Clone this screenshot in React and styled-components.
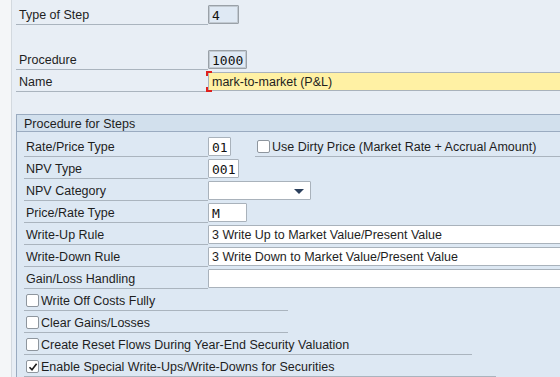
import React from "react";
import styled, { createGlobalStyle } from "styled-components";

const Global = createGlobalStyle`
  html, body { margin: 0; padding: 0; }
  body {
    width: 560px; height: 377px; overflow: hidden;
    background: #e8eef5;
    font-family: "Liberation Sans", Arial, sans-serif;
    font-size: 12.5px; color: #1e1e1e;
  }
`;

const Page = styled.div`
  display: flex;
  width: 560px;
  height: 377px;
  overflow: hidden;
`;

const SideStrip = styled.div`
  width: 11px;
  flex: none;
  background: #f4f6f8;
  border-right: 1px solid #d3d9df;
`;

const Main = styled.div`
  flex: 1;
  padding: 3px 0 0 4px;
  display: flex;
  flex-direction: column;
  min-width: 0;
`;

const Row = styled.div`
  display: flex;
  align-items: flex-start;
  height: 22px;
  flex: none;
  margin-top: ${(p) => p.$gap || 0}px;
`;

const Label = styled.div`
  box-sizing: border-box;
  width: ${(p) => p.$w || 192}px;
  height: 22px;
  flex: none;
  display: flex;
  align-items: center;
  padding-left: ${(p) => (p.$pad != null ? p.$pad : 3)}px;
  padding-top: 2px;
  border-bottom: 1px solid #aab4be;
  white-space: nowrap;
`;

const Field = styled.div`
  box-sizing: border-box;
  margin-top: 2px;
  height: 19px;
  width: ${(p) => (p.$w ? p.$w + "px" : "auto")};
  ${(p) => (p.$grow ? "flex: 1; min-width: 0; margin-right: -40px;" : "flex: none;")}
  display: flex;
  align-items: center;
  padding-left: 3px;
  padding-top: 1px;
  background: ${(p) =>
    p.$display ? "#dfe9f4" : p.$required ? "#fff1a4" : "#ffffff"};
  border: 1px solid ${(p) => (p.$display ? "#9aa1a8" : "#a9b2bb")};
  box-shadow: ${(p) => (p.$display ? "inset 0 0 0 1px #c2cad2" : "none")};
  border-radius: 1px;
  white-space: nowrap;
  position: relative;
`;

const Mono = styled.span`
  font-family: "DejaVu Sans Mono", "Liberation Mono", monospace;
  font-size: 13px;
  color: #111;
`;

const Corner = styled.span`
  position: absolute;
  left: -3px;
  width: 4px;
  height: 3px;
  border-left: 2px solid #e0201c;
  ${(p) =>
    p.$bottom
      ? "bottom: -2px; border-bottom: 2px solid #e0201c;"
      : "top: -2px; border-top: 2px solid #e0201c;"}
`;

const Group = styled.div`
  margin-top: 22px;
  margin-right: -20px;
  border: 1px solid #9aabc0;
  border-right: none;
  background: #dde8f3;
  flex: 1;
`;

const GroupHeader = styled.div`
  height: 17px;
  display: flex;
  align-items: center;
  padding-left: 7px;
  padding-top: 1px;
  box-sizing: border-box;
  background: #d2e0ed;
  border-bottom: 1px solid #9aabc0;
`;

const GroupBody = styled.div`
  padding: 3px 0 0 7px;
  display: flex;
  flex-direction: column;
`;

const CheckLabel = styled.div`
  box-sizing: border-box;
  width: ${(p) => (p.$w ? p.$w + "px" : "auto")};
  ${(p) => (p.$grow ? "flex: 1;" : "flex: none;")}
  margin-left: ${(p) => p.$ml || 0}px;
  height: 22px;
  display: flex;
  align-items: center;
  gap: 2px;
  padding-left: 2px;
  padding-top: 2px;
  border-bottom: 1px solid #aab4be;
  white-space: nowrap;
`;

const Box = styled.span`
  box-sizing: border-box;
  width: 13px;
  height: 13px;
  flex: none;
  background: #ffffff;
  border: 1px solid #8e969e;
  border-radius: 2px;
  display: flex;
  align-items: center;
  justify-content: center;
`;

const Caret = styled.span`
  margin-left: auto;
  margin-right: 6px;
  width: 0;
  height: 0;
  border-left: 5px solid transparent;
  border-right: 5px solid transparent;
  border-top: 5px solid #2b3f5c;
`;

const Check = ({ checked, children, w, grow, ml }) => (
  <CheckLabel $w={w} $grow={grow} $ml={ml}>
    <Box>
      {checked && (
        <svg width="10" height="10" viewBox="0 0 10 10">
          <path d="M1.5 5.2 L4 7.8 L8.6 1.8" fill="none" stroke="#1c1c1c" strokeWidth="1.6" />
        </svg>
      )}
    </Box>
    <span>{children}</span>
  </CheckLabel>
);

export default function App() {
  return (
    <>
      <Global />
      <Page>
        <SideStrip />
        <Main>
          <Row>
            <Label>Type of Step</Label>
            <Field $display $w={31}>
              <Mono>4</Mono>
            </Field>
          </Row>
          <Row $gap={23}>
            <Label>Procedure</Label>
            <Field $display $w={39}>
              <Mono>1000</Mono>
            </Field>
          </Row>
          <Row>
            <Label>Name</Label>
            <Field $required $grow>
              <Corner />
              <Corner $bottom />
              <span>mark-to-market (P&amp;L)</span>
            </Field>
          </Row>
          <Group>
            <GroupHeader>Procedure for Steps</GroupHeader>
            <GroupBody>
              <Row>
                <Label $w={184} $pad={2}>Rate/Price Type</Label>
                <Field $w={23}>
                  <Mono>01</Mono>
                </Field>
                <Check ml={24} grow>
                  Use Dirty Price (Market Rate + Accrual Amount)
                </Check>
              </Row>
              <Row>
                <Label $w={184} $pad={2}>NPV Type</Label>
                <Field $w={31}>
                  <Mono>001</Mono>
                </Field>
              </Row>
              <Row>
                <Label $w={184} $pad={2}>NPV Category</Label>
                <Field $w={103}>
                  <Caret />
                </Field>
              </Row>
              <Row>
                <Label $w={184} $pad={2}>Price/Rate Type</Label>
                <Field $w={39}>
                  <Mono>M</Mono>
                </Field>
              </Row>
              <Row>
                <Label $w={184} $pad={2}>Write-Up Rule</Label>
                <Field $grow>3 Write Up to Market Value/Present Value</Field>
              </Row>
              <Row>
                <Label $w={184} $pad={2}>Write-Down Rule</Label>
                <Field $grow>3 Write Down to Market Value/Present Value</Field>
              </Row>
              <Row>
                <Label $w={184} $pad={2}>Gain/Loss Handling</Label>
                <Field $grow />
              </Row>
              <Row>
                <Check w={264}>Write Off Costs Fully</Check>
              </Row>
              <Row>
                <Check w={264}>Clear Gains/Losses</Check>
              </Row>
              <Row>
                <Check w={448}>Create Reset Flows During Year-End Security Valuation</Check>
              </Row>
              <Row>
                <Check w={472} checked>
                  Enable Special Write-Ups/Write-Downs for Securities
                </Check>
              </Row>
            </GroupBody>
          </Group>
        </Main>
      </Page>
    </>
  );
}
